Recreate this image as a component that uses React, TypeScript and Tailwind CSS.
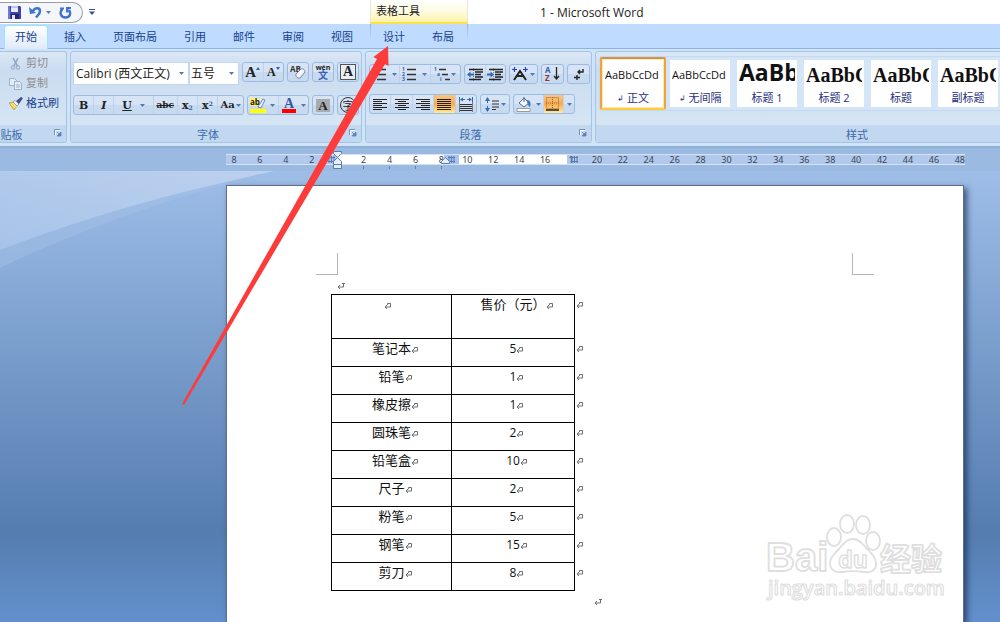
import type { ReactNode } from 'react';
import clsx from 'clsx';

interface Product {
  name: string;
  price: string;
}

interface StyleItem {
  name: string;
  sample: string;
  sampleClass: string;
  mark?: boolean;
  selected?: boolean;
}

const tabs = ['开始', '插入', '页面布局', '引用', '邮件', '审阅', '视图'];
const tableTabs = ['设计', '布局'];

const products: Product[] = [
  { name: '笔记本', price: '5' },
  { name: '铅笔', price: '1' },
  { name: '橡皮擦', price: '1' },
  { name: '圆珠笔', price: '2' },
  { name: '铅笔盒', price: '10' },
  { name: '尺子', price: '2' },
  { name: '粉笔', price: '5' },
  { name: '钢笔', price: '15' },
  { name: '剪刀', price: '8' },
];

const styleItems: StyleItem[] = [
  { name: '正文', sample: 'AaBbCcDd', sampleClass: 'text-[11px]', mark: true, selected: true },
  { name: '无间隔', sample: 'AaBbCcDd', sampleClass: 'text-[11px]', mark: true },
  { name: '标题 1', sample: 'AaBb', sampleClass: 'pb-1 text-[23px] font-bold' },
  { name: '标题 2', sample: 'AaBbC', sampleClass: "text-[20px] font-bold font-['Liberation_Serif',serif]" },
  { name: '标题', sample: 'AaBbC', sampleClass: "text-[20px] font-bold font-['Liberation_Serif',serif]" },
  { name: '副标题', sample: 'AaBbC', sampleClass: "text-[20px] font-bold font-['Liberation_Serif',serif]" },
];

// -8 .. 48 in steps of two characters
const rulerMarks = Array.from({ length: 29 }, (_, i) => Math.abs(i * 2 - 8));

function Caret() {
  return (
    <svg className="shrink-0" width="5" height="3" viewBox="0 0 5 3">
      <path d="M0 0h5L2.5 3z" fill="#4f7ab5" />
    </svg>
  );
}

function Cluster({ children, className }: { children: ReactNode; className?: string }) {
  return (
    <div
      className={clsx(
        'flex h-5 shrink-0 overflow-hidden rounded-[3px] border border-[#9dbbe0] bg-linear-to-b from-[#d6e4f5] from-50% to-[#c7daf0] to-50% divide-x divide-[#bdd2ec]',
        className
      )}
    >
      {children}
    </div>
  );
}

function Tool({ label, children, className, caret }: { label: string; children: ReactNode; className?: string; caret?: boolean }) {
  return (
    <button
      type="button"
      aria-label={label}
      className={clsx('flex min-w-0 flex-1 items-center justify-center gap-1 leading-none text-[#222]', className)}
    >
      {children}
      {caret && <Caret />}
    </button>
  );
}

function Group({ title, children, className, launcher = true, titleClass }: { title: string; children: ReactNode; className?: string; launcher?: boolean; titleClass?: string }) {
  return (
    <section
      className={clsx(
        'flex shrink-0 flex-col overflow-hidden rounded-[3px] border border-[#a6c3e3] bg-linear-to-b from-[#dae7f6] via-[#cbdcf0] via-20% to-[#d8e8f5]',
        className
      )}
    >
      <div className="h-[74px]">{children}</div>
      <div className="relative flex h-[17px] items-center justify-center bg-[#c1d8f0] pt-[3px] text-[11px] text-[#3e6aaa]">
        <span className={titleClass}>{title}</span>
        {launcher && (
          <button type="button" aria-label={`${title}选项`} className="absolute right-1 top-1">
            <svg width="8" height="8" viewBox="0 0 8 8" fill="none">
              <path d="M.5 6V.5H6" stroke="#6f93c2" />
              <path d="M1.5 6V1.5H6" stroke="#fff" />
              <path d="M3 3l2 2M7 3v4H3z" stroke="#5d83b8" fill="#5d83b8" strokeWidth=".8" />
            </svg>
          </button>
        )}
      </div>
    </section>
  );
}

function SaveIcon() {
  return (
    <svg width="13" height="13" viewBox="0 0 13 13">
      <path d="M0 0h12l1 1v12H0z" fill="#3f44a8" />
      <path d="M0 0h2v13H0z" fill="#6f78d8" />
      <path d="M3 0h7v6H3z" fill="#e8ecfa" />
      <path d="M3 0h7v2H3z" fill="#b8c3ee" />
      <path d="M3 8h8v5H3z" fill="#23276a" />
      <path d="M4 9h3v4H4z" fill="#dfe4f7" />
    </svg>
  );
}

function UndoIcon() {
  return (
    <svg width="13" height="13" viewBox="0 0 13 13" fill="none">
      <path d="M4 5c2-4 7-3.500 7 0 0 3-2 4-4 6.500" stroke="#3f74cc" strokeWidth="2.500" />
      <path d="M0 1l1 7 6-1z" fill="#3f74cc" />
    </svg>
  );
}

function RedoIcon() {
  return (
    <svg width="13" height="13" viewBox="0 0 13 13" fill="none">
      <path d="M3.500 3C0 6 1.500 11.500 6.500 11.500S12 7 10 4" stroke="#3f74cc" strokeWidth="2.400" />
      <path d="M7 6.500V1h5v2H9.500v3.500z" fill="#3f74cc" />
      <path d="M1 1.500h4v2H1z" fill="#3f74cc" />
    </svg>
  );
}

function CutIcon() {
  return (
    <svg width="13" height="13" viewBox="0 0 13 13" fill="none" stroke="#8ba3c2">
      <path d="M4 1l4.500 8M9 1L5 9" strokeWidth="1.500" />
      <circle cx="4" cy="10.500" r="1.700" />
      <circle cx="9" cy="10.500" r="1.700" />
    </svg>
  );
}

function CopyIcon() {
  return (
    <svg width="13" height="13" viewBox="0 0 13 13" fill="#e3ebf5" stroke="#9db1cc">
      <path d="M.5 1.500h5l2 2v5h-7z" />
      <path d="M5.500 4.500h5l2 2v6h-7z" />
      <path d="M7 8h4M7 10h4" />
    </svg>
  );
}

function BrushIcon() {
  return (
    <svg width="14" height="13" viewBox="0 0 14 13">
      <path d="M0 6l4-1 4 4-3 4z" fill="#f1cf55" stroke="#b08a2a" strokeWidth=".6" />
      <path d="M2 7l4 4M3.500 6l4 4" stroke="#fff0a8" />
      <path d="M4 5l2-1.500 4 3.500-2 2z" fill="#f4f4f4" stroke="#777" strokeWidth=".6" />
      <path d="M7 4l5-4 2 1-4 6z" fill="#3f4f8c" />
    </svg>
  );
}

function LinesIcon({ rows }: { rows: [number, number][] }) {
  return (
    <svg width="14" height="13" viewBox="0 0 14 13">
      {rows.map(([start, end], i) => (
        <path key={i} d={`M${start} ${i * 2 + 1.5}H${end}`} stroke="#222" strokeWidth="1.200" />
      ))}
    </svg>
  );
}

function ListIcon({ kind }: { kind: 'bullet' | 'number' | 'level' }) {
  const labels = { bullet: ['', '', ''], number: ['1', '2', '3'], level: ['1', 'a', 'i'] }[kind];
  return (
    <svg width="16" height="15" viewBox="0 0 16 15">
      {labels.map((text, i) => {
        const shift = kind === 'level' ? i * 3 : 0;
        return (
          <g key={i}>
            {text ? (
              <text x={shift} y={i * 5 + 4} fontSize="5" fontWeight="700" fill="#2f5da8">{text}</text>
            ) : (
              <circle cx="1.500" cy={i * 5 + 2.5} r="1.300" fill="#2f5da8" />
            )}
            <path d={`M${shift + 5} ${i * 5 + 2.5}H${kind === 'level' ? 12 + i * 2 : 14}`} stroke="#333" strokeWidth="1.300" />
          </g>
        );
      })}
    </svg>
  );
}

function IndentIcon({ flip }: { flip?: boolean }) {
  return (
    <svg width="16" height="13" viewBox="0 0 16 13">
      <path d="M2 1.500h14M8 4h8M8 6.500h6M8 9h8M2 11.500h12" stroke="#222" strokeWidth="1.500" />
      <path d={flip ? 'M7 6.500L3.500 3.500v2H0v2h3.500v2z' : 'M0 6.500l3.500-3v2H7v2H3.500v2z'} fill="#3269bd" />
      <path d="M6.500 0v13" stroke="#555" strokeWidth=".7" strokeDasharray="1 1" />
    </svg>
  );
}

function ReturnMark({ cell, className }: { cell?: boolean; className?: string }) {
  return (
    <svg className={clsx('inline-block shrink-0', className)} width="8" height="8" viewBox="0 0 8 8" fill="none" stroke="#6e6e6e">
      {cell ? (
        <path d="M3.500 3V1.500h3v3.500H1M3 3L1 5l2 2" />
      ) : (
        <path d="M6.500 1v4H1M3 3L1 5l2 2M5 1.500h3" />
      )}
    </svg>
  );
}

function TitleBar() {
  return (
    <header className="flex h-6 shrink-0 bg-white">
      <div className="flex w-[370px] shrink-0 items-start pt-[2px]">
        <div className="flex h-[21px] w-[83px] items-center rounded-r-full border border-l-0 border-[#989ca4] bg-[#f4f6fa] pl-2">
          <button type="button" aria-label="保存"><SaveIcon /></button>
          <button type="button" aria-label="撤消" className="ml-2 flex items-center gap-1"><UndoIcon /><Caret /></button>
          <button type="button" aria-label="重复" className="ml-2"><RedoIcon /></button>
        </div>
        <button type="button" aria-label="自定义快速访问工具栏" className="ml-[6px] mt-[7px]">
          <svg width="6" height="6" viewBox="0 0 6 6" fill="#2f5288">
            <path d="M0 0h6v1H0zM0 2.500h6L3 6z" />
          </svg>
        </button>
      </div>
      <div className="w-[98px] shrink-0 border-x border-b-2 border-x-[#e6e6dc] border-b-[#ffe04a] bg-linear-to-b from-white via-[#fdfbe3] to-[#fff3a6] pl-[5px] text-[11px] leading-[21px] text-[#222]">
        表格工具
      </div>
      <h1 className="ml-[72px] pt-px text-xs leading-6 text-[#222]">1 - Microsoft Word</h1>
    </header>
  );
}

function TabBar() {
  return (
    <nav className="flex h-[25px] shrink-0 border-b border-[#8fb4e4] bg-[#bfdbff] pl-1 text-[11px] text-[#15428b]">
      <div className="flex w-[366px] shrink-0 gap-[5px]">
        {tabs.map((tab, i) => (
          <button
            key={tab}
            type="button"
            className={clsx(
              'mt-px h-6 px-[10px] border border-b-0',
              i === 0 ? 'rounded-t-[4px] border-[#9ee4f3] bg-linear-to-b from-white to-[#dfeaf8]' : 'border-transparent'
            )}
          >
            {tab}
          </button>
        ))}
      </div>
      <div className="relative flex w-[98px] shrink-0 gap-[5px] pl-[2px]">
        <span className="absolute left-0 top-0 h-4 w-px bg-linear-to-b from-[#9fb4cc] to-[#bfdbff]" />
        <span className="absolute right-0 top-0 h-4 w-px bg-linear-to-b from-[#9fb4cc] to-[#bfdbff]" />
        {tableTabs.map((tab) => (
          <button key={tab} type="button" className="mt-px h-6 px-[11px]">
            {tab}
          </button>
        ))}
      </div>
    </nav>
  );
}

function ClipboardGroup() {
  return (
    <Group title="剪贴板" className="w-[67px] rounded-l-none border-l-0" titleClass="-ml-[54px]">
      <div className="flex flex-col pl-[9px] pt-px text-[11px] leading-[20px] text-[#8d8d8d]">
        <button type="button" className="flex items-center gap-1"><CutIcon />剪切</button>
        <button type="button" className="flex items-center gap-1"><CopyIcon />复制</button>
        <button type="button" className="flex items-center gap-[3px] text-[#15428b]"><BrushIcon />格式刷</button>
      </div>
    </Group>
  );
}

function FontGroup() {
  return (
    <Group title="字体" className="w-[292px]" titleClass="-ml-4">
      <div className="flex items-start pl-[2px] pt-[10px] text-xs text-[#222]">
        <label className="relative flex h-[23px] w-[116px] items-center border border-[#c3d8f0] bg-white">
          <select aria-label="字体名称" className="h-full w-full appearance-none bg-transparent pl-[2px]">
            <option>Calibri (西文正文)</option>
          </select>
          <span className="pointer-events-none absolute right-1"><Caret /></span>
        </label>
        <label className="relative flex h-[23px] w-[50px] items-center border border-[#c3d8f0] bg-white">
          <select aria-label="字号" className="h-full w-full appearance-none bg-transparent pl-px">
            <option>五号</option>
          </select>
          <span className="pointer-events-none absolute right-1"><Caret /></span>
        </label>
        <Cluster className="ml-[3px] w-[42px] font-['Liberation_Serif',serif] font-bold">
          <Tool label="增大字体" className="text-[15px]">
            A<svg className="-ml-1 -mt-2 shrink-0" width="4" height="3" viewBox="0 0 4 3"><path d="M0 3h4L2 0z" fill="#2f5da8" /></svg>
          </Tool>
          <Tool label="缩小字体" className="text-[12px]">
            A<svg className="-ml-1 -mt-2 shrink-0" width="4" height="3" viewBox="0 0 4 3"><path d="M0 0h4L2 3z" fill="#2f5da8" /></svg>
          </Tool>
        </Cluster>
        <Cluster className="ml-[3px] w-[22px]">
          <Tool label="清除格式">
            <svg width="17" height="16" viewBox="0 0 17 16">
              <text x="0" y="8" fontSize="8" fontWeight="700" fill="#333">AB</text>
              <path d="M6 10l5-5c2-1 4 1 4 3l-5 6c-2 1-5-2-4-4z" fill="#f2f5fb" stroke="#71839f" />
            </svg>
          </Tool>
        </Cluster>
        <Cluster className="ml-[3px] w-[22px]">
          <Tool label="拼音指南">
            <svg width="18" height="18" viewBox="0 0 18 18">
              <text x="9" y="7" fontSize="7" fontWeight="700" textAnchor="middle" fill="#222">wén</text>
              <text x="9" y="16" fontSize="10" fontWeight="700" textAnchor="middle" fill="#3a62b5">文</text>
            </svg>
          </Tool>
        </Cluster>
        <Cluster className="ml-[3px] w-[22px]">
          <Tool label="字符边框">
            <span className="flex h-4 w-4 items-center justify-center border border-[#555] bg-[#e8eef7] font-['Liberation_Serif',serif] text-[14px] font-bold">A</span>
          </Tool>
        </Cluster>
      </div>
      <div className="flex pl-[2px] pt-[10px] font-['DejaVu_Serif',serif]">
        <Cluster className="w-[171px] text-[11px]">
          <Tool label="加粗" className="font-bold">B</Tool>
          <Tool label="倾斜" className="font-bold italic">I</Tool>
          <Tool label="下划线" className="flex-[2]" caret>
            <span className="mr-1 font-bold underline">U</span>
          </Tool>
          <Tool label="删除线" className="flex-[1.2]">
            <span className="text-[9px] font-bold line-through">abc</span>
          </Tool>
          <Tool label="下标">
            <span className="font-bold">x<sub className="text-[6px] text-[#2f5da8]">2</sub></span>
          </Tool>
          <Tool label="上标">
            <span className="font-bold">x<sup className="text-[6px] text-[#2f5da8]">2</sup></span>
          </Tool>
          <Tool label="更改大小写" className="flex-[1.3] gap-[1px] text-[10px] font-bold" caret>Aa</Tool>
        </Cluster>
        <Cluster className="ml-[3px] w-[62px]">
          <Tool label="突出显示" caret>
            <svg width="16" height="17" viewBox="0 0 16 17">
              <path d="M0 1h9v8H0z" fill="#fff26a" />
              <text x="0" y="8" fontSize="8" fontWeight="700" fontFamily="Open Sans" fill="#222">ab</text>
              <path d="M8 10l5-8 2 1-4 8z" fill="#eef2fa" stroke="#566d98" strokeWidth=".8" />
              <path d="M0 12h16v4H0z" fill="#ff0" />
            </svg>
          </Tool>
          <Tool label="字体颜色" caret>
            <svg width="16" height="17" viewBox="0 0 16 17">
              <text x="8" y="11" fontSize="14" fontWeight="700" textAnchor="middle" fontFamily="Liberation Serif" fill="#345b9e">A</text>
              <path d="M1 12h14v4H1z" fill="#f00" />
            </svg>
          </Tool>
        </Cluster>
        <Cluster className="ml-[3px] w-[22px]">
          <Tool label="字符底纹">
            <span className="bg-[#a8abb0] px-[2px] font-['Liberation_Serif',serif] text-[13px] font-bold">A</span>
          </Tool>
        </Cluster>
        <Cluster className="ml-[3px] w-[22px]">
          <Tool label="带圈字符">
            <span className="flex h-4 w-4 items-center justify-center rounded-full border border-[#333] font-['Noto_Sans_CJK_SC',sans-serif] text-[11px]">字</span>
          </Tool>
        </Cluster>
      </div>
    </Group>
  );
}

const full: [number, number][] = [[0, 14], [0, 14], [0, 14], [0, 14], [0, 14], [0, 14]];

function ParagraphGroup() {
  return (
    <Group title="段落" className="w-[227px]" titleClass="-ml-4">
      <div className="flex gap-[3px] pl-[3px] pt-3">
        <Cluster className="w-[92px]">
          <Tool label="项目符号" caret><ListIcon kind="bullet" /></Tool>
          <Tool label="编号" caret><ListIcon kind="number" /></Tool>
          <Tool label="多级列表" className="gap-[1px]" caret><ListIcon kind="level" /></Tool>
        </Cluster>
        <Cluster className="w-[42px]">
          <Tool label="减少缩进量"><IndentIcon /></Tool>
          <Tool label="增加缩进量"><IndentIcon flip /></Tool>
        </Cluster>
        <Cluster className="w-[29px]">
          <Tool label="中文版式" className="gap-[2px]" caret>
            <svg width="16" height="14" viewBox="0 0 16 14" fill="none">
              <path d="M2 13l6-9 6 9M5 9h6" stroke="#222" strokeWidth="2" />
              <path d="M0 2.500h5M2.500 0v5M11 2.500h5M13.500 0v5" stroke="#2c3fb0" strokeWidth="1.200" />
            </svg>
          </Tool>
        </Cluster>
        <Cluster className="w-[23px]">
          <Tool label="排序">
            <svg width="15" height="18" viewBox="0 0 15 18">
              <text x="0" y="8" fontSize="8" fontWeight="700" fill="#2f5da8">A</text>
              <text x="0" y="16" fontSize="8" fontWeight="700" fill="#a02c3a">Z</text>
              <path d="M11.500 2v12M9 11l2.500 3 2.500-3" stroke="#222" fill="none" strokeWidth="1.300" />
            </svg>
          </Tool>
        </Cluster>
        <Cluster className="w-[23px]">
          <Tool label="显示编辑标记">
            <svg width="12" height="13" viewBox="0 0 12 13" fill="none" stroke="#222" strokeWidth="1.400">
              <path d="M10 1v3H5M7 2L5 4l2 2M1 9.500h6M4 7v5" />
            </svg>
          </Tool>
        </Cluster>
      </div>
      <div className="flex gap-[3px] pl-[3px] pt-[10px]">
        <Cluster className="w-[108px]">
          <Tool label="左对齐"><LinesIcon rows={[[0, 14], [0, 9], [0, 14], [0, 9], [0, 14], [0, 9]]} /></Tool>
          <Tool label="居中"><LinesIcon rows={[[0, 14], [3, 11], [0, 14], [3, 11], [0, 14], [3, 11]]} /></Tool>
          <Tool label="右对齐"><LinesIcon rows={[[0, 14], [5, 14], [0, 14], [5, 14], [0, 14], [5, 14]]} /></Tool>
          <Tool label="两端对齐" className="bg-linear-to-b from-[#f8c583] via-[#fba94c] to-[#ffeb9a]"><LinesIcon rows={full} /></Tool>
          <Tool label="分散对齐">
            <svg width="14" height="15" viewBox="0 0 14 15">
              <path d="M.5 0v5M13.500 0v5M3 2.500h3M8 2.500h3" stroke="#3269bd" />
              <path d="M1 2.500l3-2v4zM13 2.500l-3-2v4z" fill="#3269bd" />
              <path d="M1 7.500h12M1 9.500h12M1 11.500h12M1 13.500h12" stroke="#333" strokeWidth="1.100" />
              <path d="M.5 5v10M13.500 5v10" stroke="#777" />
            </svg>
          </Tool>
        </Cluster>
        <Cluster className="w-[30px]">
          <Tool label="行距" className="gap-[2px]" caret>
            <svg width="14" height="15" viewBox="0 0 14 15">
              <path d="M2.500 2v11" stroke="#3269bd" strokeDasharray="4 3" />
              <path d="M0 4l2.500-4L5 4zM0 11l2.500 4L5 11z" fill="#3269bd" />
              <path d="M7 4h7M7 7h7M7 10h7M7 12.500h4" stroke="#333" strokeWidth="1.200" />
            </svg>
          </Tool>
        </Cluster>
        <Cluster className="w-[62px]">
          <Tool label="底纹" className="flex-[1.5] gap-[3px]" caret>
            <svg className="shrink-0" width="17" height="16" viewBox="0 0 17 16">
              <path d="M3 7l5-5 5 5-5 4z" fill="#f5f8fc" stroke="#53698c" />
              <path d="M8 1v5" stroke="#53698c" />
              <path d="M11 4c4 0 4 4 3 7-2-1-3-4-3-7z" fill="#3f76c4" />
              <path d="M1 12.500h13v3H1z" fill="#fff" stroke="#888" strokeWidth=".8" />
            </svg>
          </Tool>
          <Tool label="边框" className="bg-linear-to-b from-[#f8c583] via-[#fba94c] to-[#ffeb9a]">
            <svg className="shrink-0" width="14" height="14" viewBox="0 0 14 14" fill="none">
              <path d="M.5 .5h12v11H.5zM6.500 0v12M0 6h13" stroke="#8a6a45" strokeDasharray="1 1" />
              <path d="M0 13h13" stroke="#222" strokeWidth="1.500" />
            </svg>
          </Tool>
          <Tool label="边框选项" className="max-w-[10px]"><Caret /></Tool>
        </Cluster>
      </div>
    </Group>
  );
}

function StylesGroup() {
  return (
    <Group title="样式" className="w-[524px]" launcher={false}>
      <div className="mt-1 ml-[3px] flex h-[55px] gap-px rounded-l-[3px] border border-[#c3d9f0] bg-[#d4e5f8]">
        {styleItems.map((item) => (
          <button
            key={item.name}
            type="button"
            className={clsx(
              'h-[53px] w-[66px] shrink-0 border-2 p-px',
              item.selected
                ? 'rounded-[2px] border-[#f0a33c] border-t-[#c9935a] border-b-[#ffcb3b] bg-[#ffe9a8]'
                : 'border-transparent'
            )}
          >
            <span className="flex h-[47px] flex-col overflow-hidden bg-white px-[2px]">
              <span className={clsx('flex h-[29px] items-center overflow-hidden whitespace-nowrap leading-none text-[#111]', item.sampleClass)}>
                {item.sample}
              </span>
              <span className="flex items-center justify-center gap-[3px] text-[11px] leading-[17px] text-[#1f2f80]">
                {item.mark && <span className="text-[8px]">↲</span>}
                {item.name}
              </span>
            </span>
          </button>
        ))}
      </div>
    </Group>
  );
}

function GridHandle() {
  return (
    <svg width="7" height="7" viewBox="0 0 7 7">
      <path d="M1 0v7M3.500 0v7M6 0v7M0 1.500h7M0 5.500h7" stroke="#4f74ab" strokeWidth=".9" />
    </svg>
  );
}

function Ruler() {
  return (
    <div className="h-[23px] shrink-0 bg-[#9bbae1] pl-[226px] pr-[35px] pt-[6px]">
      <div className="relative h-[11px]">
        <div className="flex h-full border-y border-[#d3e2f6] bg-[#b0c9ec]">
          <div className="w-[112px]" />
          <div className="w-[106px] bg-white" />
          <div className="w-[15px] bg-[#a9c5ee]" />
          <div className="w-[108px] bg-white" />
        </div>
        <div className="absolute inset-y-0 left-[2px] -right-px flex justify-between font-['Noto_Sans',sans-serif] text-[9px] leading-[11px] text-[#3d4657]">
          {rulerMarks.map((mark, i) => (
            <span key={i} className="flex w-3 justify-center">
              {i === 4 ? '' : mark === 18 ? '1' : mark}
            </span>
          ))}
        </div>
        <div className="absolute left-[102px] top-[2px]"><GridHandle /></div>
        <div className="absolute left-[222px] top-[2px]"><GridHandle /></div>
        <div className="absolute left-[345px] top-[2px]"><GridHandle /></div>
        <svg className="absolute -top-[3px] left-[107px]" width="125" height="20" viewBox="0 0 125 20">
          <g fill="#e6eefa" stroke="#5f7ba6">
            <path d="M.5 .5h8v2l-4 4-4-4zM4.500 6.500l4 4v3h-8v-3zM.5 13.500h8v4h-8z" />
            <path d="M108.500 12.500v-2l4-4 4 4v2z" />
          </g>
          <path d="M30.500 15v3M56.500 15v3M82.500 15v3M108.500 15v3" stroke="#6780a6" />
        </svg>
      </div>
    </div>
  );
}

function PriceTable() {
  const cell = 'border border-black p-0 text-center align-top font-normal';
  return (
    <table className="ml-[104px] w-[255px] table-fixed border-collapse text-[13px] leading-[18px] text-[#111]">
      <colgroup>
        <col className="w-[120px]" />
        <col className="w-[123px]" />
        <col className="w-3" />
      </colgroup>
      <thead>
        <tr className="h-11">
          <th className={cell}><ReturnMark cell className="mr-2" /></th>
          <th className={cell}>售价（元）<ReturnMark cell className="-mr-2" /></th>
          <td className="p-0 pl-px align-top"><ReturnMark cell /></td>
        </tr>
      </thead>
      <tbody>
        {products.map((product) => (
          <tr key={product.name} className="h-7">
            <td className={cell}>{product.name}<ReturnMark cell className="-mr-2" /></td>
            <td className={cell}><span className="text-xs">{product.price}</span><ReturnMark cell className="-mr-2" /></td>
            <td className="p-0 pl-px align-top"><ReturnMark cell /></td>
          </tr>
        ))}
      </tbody>
    </table>
  );
}

function Watermark() {
  return (
    <svg className="absolute bottom-4 right-4 overflow-visible" width="182" height="92" viewBox="0 0 182 92">
      <g fill="#fff" stroke="#dfdfdf" strokeWidth="1.800" strokeLinejoin="round" fontFamily="Open Sans, Noto Sans CJK SC, sans-serif" fontWeight="700">
        <text x="1" y="57" fontSize="40" fontFamily="Liberation Sans">Bai</text>
        <ellipse cx="69" cy="23" rx="7" ry="9" />
        <ellipse cx="82" cy="10" rx="7" ry="9" />
        <ellipse cx="98" cy="11" rx="7" ry="9" />
        <ellipse cx="108" cy="27" rx="7" ry="9" />
        <path d="M88 25c7 0 10 6 14 10 6 5 9 9 9 15 0 7-6 9-12 8-7-1-15-1-22 0-6 1-12-2-12-9 0-6 5-10 9-14 5-5 7-10 14-10z" />
        <text x="88" y="54" fontSize="23" textAnchor="middle" strokeWidth="1.500">du</text>
        <text x="115" y="56" fontSize="31">经验</text>
        <text x="3" y="81" fontSize="20" fontWeight="600" strokeWidth="1.200">jingyan.baidu.com</text>
      </g>
    </svg>
  );
}

function DocumentArea() {
  return (
    <main className="relative flex flex-1 overflow-hidden bg-linear-to-b from-[#9ebee8] via-[#557db0] via-80% to-[#6390cc] pl-[226px] pr-9 pt-[14px]">
      <svg className="absolute left-0 top-0" width="274" height="100" viewBox="0 0 274 100">
        <defs>
          <linearGradient id="swoosh" x1="0" y1="1" x2="1" y2="0">
            <stop offset="0" stopColor="#a6c3e8" />
            <stop offset="1" stopColor="#bdd1ef" />
          </linearGradient>
        </defs>
        <path d="M0 0h274C180 24 80 58 0 97z" fill="#a3bfe5" opacity=".5" />
        <path d="M0 0h274C180 20 90 44 0 79z" fill="url(#swoosh)" />
      </svg>
      <article className="relative flex-1 border border-b-0 border-[#5f6f86] bg-white shadow-[3px_3px_6px_rgba(20,40,80,0.7)]">
        <div className="flex justify-between px-[89px] pt-[67px]">
          <div className="h-[22px] w-[22px] border-b border-r border-[#b5b5b5]" />
          <div className="h-[22px] w-[22px] border-b border-l border-[#b5b5b5]" />
        </div>
        <p className="flex h-[19px] items-center pl-[110px] pt-[3px]"><ReturnMark /></p>
        <PriceTable />
        <p className="pl-[367px] leading-[18px]"><ReturnMark /></p>
        <Watermark />
      </article>
    </main>
  );
}

export default function App() {
  return (
    <div className="relative flex h-screen flex-col overflow-hidden font-['Open_Sans','Noto_Sans_CJK_SC',sans-serif]">
      <TitleBar />
      <TabBar />
      <div className="flex h-[99px] shrink-0 gap-[3px] overflow-hidden border-b-2 border-b-[#8fafd6] bg-[#d0e4f8] pt-[2px] pb-[3px]">
        <ClipboardGroup />
        <FontGroup />
        <ParagraphGroup />
        <StylesGroup />
      </div>
      <Ruler />
      <DocumentArea />
      <svg className="pointer-events-none absolute left-[180px] top-[44px]" width="212" height="364" viewBox="0 0 212 364">
        <path d="M208 2L193.500 13l3.500 2L2 360l2 1L205 20l3.500 2z" fill="#fd3b3b" />
      </svg>
    </div>
  );
}
